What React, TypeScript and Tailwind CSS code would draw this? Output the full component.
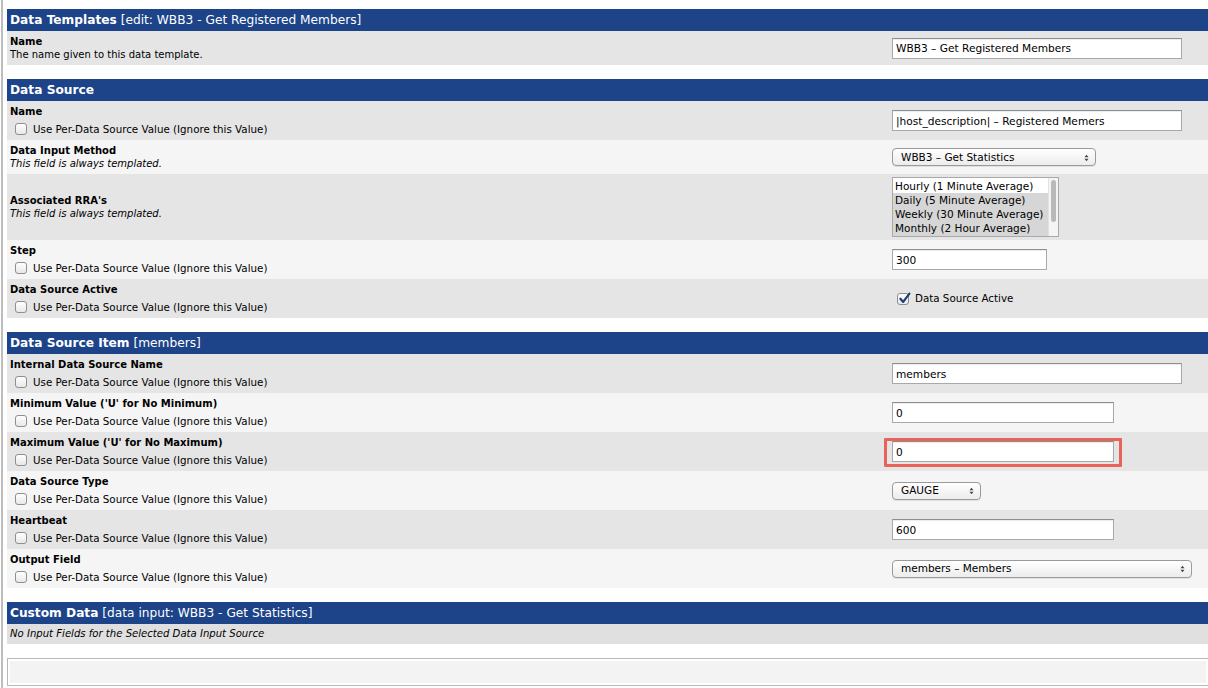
import React from "react";

const F = { fontFamily: '"DejaVu Sans", Verdana, sans-serif' };

function Checkbox({ checked = false }: { checked?: boolean }) {
  return (
    <span className="relative inline-block w-[12px] h-[12px] rounded-[3px] border border-[#8f8f8f] bg-gradient-to-b from-white to-[#e8e8e8] shrink-0">
      {checked && (
        <svg viewBox="0 0 12 12" className="absolute left-[0px] top-[-2px] w-[13px] h-[13px]">
          <path d="M2.2 6.2 L4.8 9.2 L10.5 1.5" fill="none" stroke="#1e3e7a" strokeWidth="2" strokeLinecap="round" strokeLinejoin="round" />
        </svg>
      )}
    </span>
  );
}

function Arrows() {
  return (
    <svg viewBox="0 0 6 10" className="w-[5px] h-[8px]">
      <path d="M0.5 4 L3 1 L5.5 4 Z" fill="#444" />
      <path d="M0.5 6 L3 9 L5.5 6 Z" fill="#444" />
    </svg>
  );
}

function TextInput({ value, w }: { value: string; w: string }) {
  return (
    <div className={`${w} h-[21px] border border-[#a9a9a9] border-t-[#8e8e8e] bg-white flex items-center pl-[3px] pt-[2px] text-[10.6px] text-black shadow-[inset_0_1px_1px_rgba(0,0,0,0.08)]`}>
      {value}
    </div>
  );
}

function Select({ value, w }: { value: string; w: string }) {
  return (
    <div className={`${w} h-[18px] rounded-[4px] border border-[#9a9a9a] bg-gradient-to-b from-white to-[#ececec] flex items-center justify-between pl-[8px] pr-[6px] pt-[1px] text-[10.5px] text-black shadow-[0_1px_0_rgba(0,0,0,0.08)]`}>
      <span>{value}</span>
      <Arrows />
    </div>
  );
}

function Header({ bold, rest }: { bold: string; rest?: string }) {
  return (
    <div className="h-[22px] bg-[#1d4389] text-white text-[12.2px] flex items-center pl-[3px] whitespace-nowrap">
      <span className="font-bold">{bold}</span>
      {rest && <span>&nbsp;{rest}</span>}
    </div>
  );
}

function Row({
  dark,
  h,
  title,
  desc,
  italic,
  check,
  right,
}: {
  dark: boolean;
  h: string;
  title: string;
  desc?: string;
  italic?: boolean;
  check?: boolean;
  right: React.ReactNode;
}) {
  return (
    <div className={`flex items-center ${h} ${dark ? "bg-[#e5e5e5]" : "bg-[#f5f5f5]"}`}>
      <div className="flex-1 flex flex-col justify-center pl-[3px] text-[10.3px] text-black">
        <div className="font-bold text-[10px] leading-[13px]">{title}</div>
        {desc && <div className={`leading-[14px] text-[10px] ${italic ? "italic" : ""}`}>{desc}</div>}
        {check && (
          <div className="flex items-center gap-[6px] pl-[5px] mt-[4px] leading-[14px]">
            <Checkbox />
            <span>Use Per-Data Source Value (Ignore this Value)</span>
          </div>
        )}
      </div>
      <div className="w-[316px] shrink-0 flex items-center">{right}</div>
    </div>
  );
}

function RRAList() {
  const items = [
    "Hourly (1 Minute Average)",
    "Daily (5 Minute Average)",
    "Weekly (30 Minute Average)",
    "Monthly (2 Hour Average)",
  ];
  return (
    <div className="w-[167px] h-[60px] border border-[#a9a9a9] bg-white flex">
      <div className="flex-1 flex flex-col pt-[1px]">
        {items.map((it, i) => (
          <div
            key={it}
            className={`h-[14px] leading-[15px] pl-[2px] text-[10.5px] text-black whitespace-nowrap ${i === 0 ? "bg-white" : "bg-[#d6d6d6]"}`}
          >
            {it}
          </div>
        ))}
        <div className="flex-1 bg-[#d6d6d6]" />
      </div>
      <div className="w-[10px] bg-[#f4f4f4] border-l border-[#e2e2e2] flex justify-center pt-[2px]">
        <div className="w-[5px] h-[42px] rounded-full bg-[#b9b9b9]" />
      </div>
    </div>
  );
}

export default function App() {
  return (
    <div style={F} className="min-h-[688px] bg-white">
      <div className="ml-[1px] border-l-2 border-[#bdbdbd] pl-[4px] pt-[9px] min-h-[688px]">
        <Header bold="Data Templates" rest="[edit: WBB3 - Get Registered Members]" />
        <Row
          dark
          h="h-[34px]"
          title="Name"
          desc="The name given to this data template."
          right={<TextInput value="WBB3 – Get Registered Members" w="w-[290px]" />}
        />

        <div className="h-[14px]" />
        <Header bold="Data Source" />
        <Row
          dark
          h="h-[39px]"
          title="Name"
          check
          right={<TextInput value="|host_description| – Registered Memers" w="w-[290px]" />}
        />
        <Row
          dark={false}
          h="h-[34px]"
          title="Data Input Method"
          desc="This field is always templated."
          italic
          right={<Select value="WBB3 – Get Statistics" w="w-[204px]" />}
        />
        <Row
          dark
          h="h-[66px]"
          title="Associated RRA's"
          desc="This field is always templated."
          italic
          right={<RRAList />}
        />
        <Row
          dark={false}
          h="h-[39px]"
          title="Step"
          check
          right={<TextInput value="300" w="w-[155px]" />}
        />
        <Row
          dark
          h="h-[39px]"
          title="Data Source Active"
          check
          right={
            <div className="flex items-center gap-[6px] pl-[5px] text-[10.3px] text-black">
              <Checkbox checked />
              <span>Data Source Active</span>
            </div>
          }
        />

        <div className="h-[14px]" />
        <Header bold="Data Source Item" rest="[members]" />
        <Row dark h="h-[39px]" title="Internal Data Source Name" check right={<TextInput value="members" w="w-[290px]" />} />
        <Row dark={false} h="h-[39px]" title="Minimum Value ('U' for No Minimum)" check right={<TextInput value="0" w="w-[222px]" />} />
        <Row
          dark
          h="h-[39px]"
          title="Maximum Value ('U' for No Maximum)"
          check
          right={
            <div className="relative">
              <TextInput value="0" w="w-[222px]" />
              <div className="absolute left-[-8px] top-[-3px] w-[238px] h-[29px] border-[3px] border-[#e8645a] rounded-[1px]" />
            </div>
          }
        />
        <Row dark={false} h="h-[39px]" title="Data Source Type" check right={<Select value="GAUGE" w="w-[89px]" />} />
        <Row dark h="h-[39px]" title="Heartbeat" check right={<TextInput value="600" w="w-[222px]" />} />
        <Row dark={false} h="h-[39px]" title="Output Field" check right={<Select value="members – Members" w="w-[300px]" />} />

        <div className="h-[14px]" />
        <Header bold="Custom Data" rest="[data input: WBB3 - Get Statistics]" />
        <div className="h-[20px] bg-[#e0e0e0] flex items-center pl-[3px] text-[10.1px] italic text-black">
          No Input Fields for the Selected Data Input Source
        </div>

        <div className="h-[14px]" />
        <div className="h-[28px] border-y border-l border-[#b8b8b8] p-[2px]">
          <div className="h-full bg-[#f3f3f3]" />
        </div>
      </div>
    </div>
  );
}
